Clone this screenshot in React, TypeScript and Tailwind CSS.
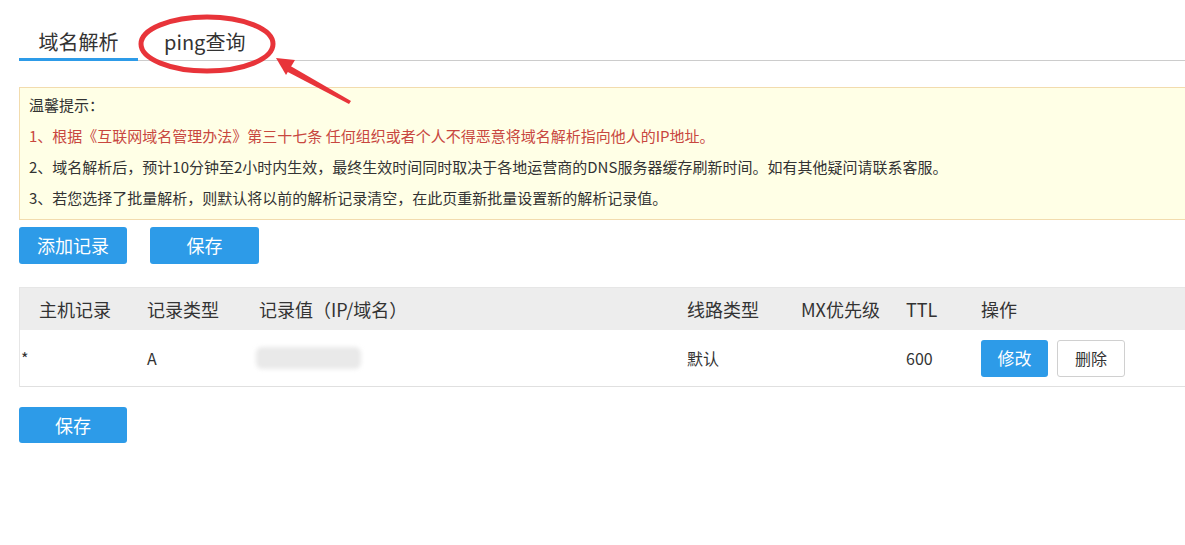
import React from "react";

const font = { fontFamily: '"Noto Sans CJK SC", "Noto Sans", sans-serif' };

function Annotation() {
  return (
    <svg className="absolute left-0 top-0 pointer-events-none" width="400" height="120" viewBox="0 0 400 120">
      <ellipse cx="207" cy="44" rx="66" ry="27" fill="none" stroke="#e8343a" strokeWidth="5" />
      <polygon points="276,58 295,60 286,75" fill="#e8343a" />
      <polygon points="287,64 351,101 349,104 284,70" fill="#e8343a" />
    </svg>
  );
}

export default function App() {
  return (
    <div className="relative w-[1185px] h-[545px] overflow-hidden bg-white text-[#333]" style={font}>
      <div className="pl-[19px]">
        {/* tabs */}
        <div className="flex items-end border-b border-[#cccccc] w-[1200px] h-[61px]">
          <div className="w-[119px] text-center text-[20px] leading-[28px] pb-[2px] border-b-[3px] border-[#2d9be8] -mb-px">
            域名解析
          </div>
          <div className="pl-[26px] text-[20px] leading-[28px] pb-[4px]">ping查询</div>
        </div>

        {/* notice */}
        <div className="mt-[26px] w-[1200px] border border-[#f2dcae] bg-[#ffffe6] pl-[9px] pt-[1px] pb-[6px] text-[15px] leading-[31px]">
          <p>温馨提示：</p>
          <p className="text-[#c8473f]">1、根据《互联网域名管理办法》第三十七条 任何组织或者个人不得恶意将域名解析指向他人的IP地址。</p>
          <p>2、域名解析后，预计10分钟至2小时内生效，最终生效时间同时取决于各地运营商的DNS服务器缓存刷新时间。如有其他疑问请联系客服。</p>
          <p>3、若您选择了批量解析，则默认将以前的解析记录清空，在此页重新批量设置新的解析记录值。</p>
        </div>

        {/* actions */}
        <div className="flex gap-[23px] mt-[7px]">
          <button className="w-[108px] h-[37px] rounded-[3px] bg-[#2d9be8] text-white text-[18px]">添加记录</button>
          <button className="w-[109px] h-[37px] rounded-[3px] bg-[#2d9be8] text-white text-[18px]">保存</button>
        </div>

        {/* table */}
        <div className="mt-[23px] w-[1200px] border-l border-[#e6e6e6]">
          <div className="grid grid-cols-[108px_112px_428px_114px_105px_75px_1fr] h-[43px] items-center bg-[#ededed] border-t border-[#e6e6e6] text-[18px]">
            <div className="pl-[19px]">主机记录</div>
            <div className="pl-[19px]">记录类型</div>
            <div className="pl-[19px]">记录值（IP/域名）</div>
            <div className="pl-[19px]">线路类型</div>
            <div className="pl-[19px]">MX优先级</div>
            <div className="pl-[19px]">TTL</div>
            <div className="pl-[19px]">操作</div>
          </div>
          <div className="grid grid-cols-[108px_112px_428px_114px_105px_75px_1fr] h-[57px] items-center border-b border-[#e0e0e0] text-[16px]">
            <div className="pl-[1px]">*</div>
            <div className="pl-[19px]">A</div>
            <div className="pl-[16px]">
              <div className="w-[105px] h-[22px] rounded-[6px] bg-[#e9e9e9] blur-[2px]" />
            </div>
            <div className="pl-[19px]">默认</div>
            <div className="pl-[19px]"></div>
            <div className="pl-[19px]">600</div>
            <div className="pl-[19px] flex gap-[9px]">
              <button className="w-[67px] h-[37px] rounded-[3px] bg-[#2d9be8] text-white text-[17px]">修改</button>
              <button className="w-[68px] h-[37px] rounded-[3px] bg-white border border-[#d0d0d0] text-[16px]">删除</button>
            </div>
          </div>
        </div>

        <div className="mt-[20px]">
          <button className="w-[108px] h-[36px] rounded-[3px] bg-[#2d9be8] text-white text-[18px]">保存</button>
        </div>
      </div>
      <Annotation />
    </div>
  );
}
